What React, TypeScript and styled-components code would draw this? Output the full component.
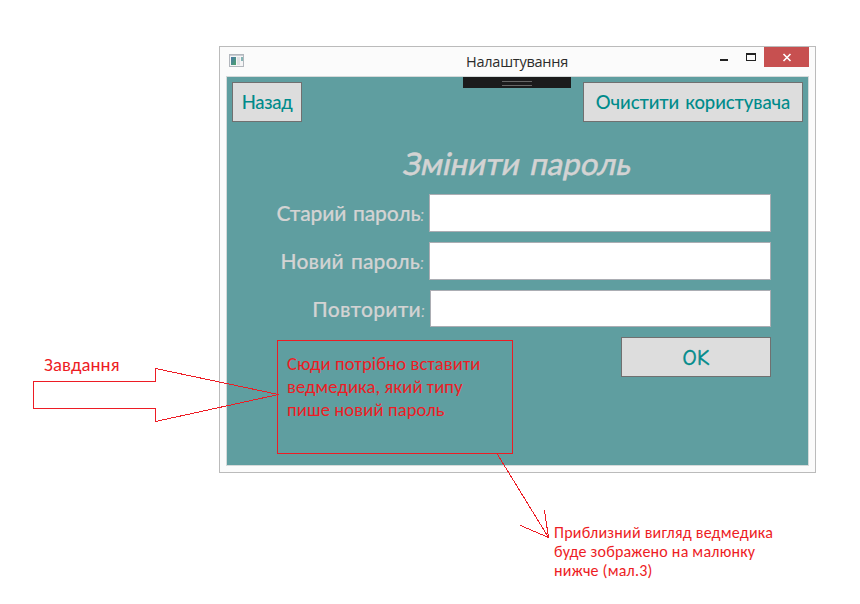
import React from "react";
import styled, { createGlobalStyle } from "styled-components";

const RED = "#ed1c24";
const TEAL = "#5f9ea0";
const comic = `"Comic Sans MS", "Comic Neue", Lato, sans-serif`;
const calibri = `Calibri, Carlito, Lato, sans-serif`;

const GlobalStyle = createGlobalStyle`
  * { box-sizing: border-box; }
  body { margin: 0; background: #fff; overflow: hidden; }
`;

const Page = styled.main`
  position: relative;
  width: 860px;
  height: 604px;
  padding: 46px 0 0 219px;
  overflow: hidden;
  background: #fff;
`;

const Window = styled.section`
  width: 597px;
  height: 427px;
  padding: 0 6px 6px;
  border: 1px solid #bbb;
  background: #fbfbfb;
  display: flex;
  flex-direction: column;
`;

const TitleBar = styled.header`
  height: 29px;
  flex: none;
  display: grid;
  grid-template-columns: 91px 1fr 92px;
  align-items: start;
`;

const AppIcon = styled.svg`
  width: 15px;
  height: 13px;
  margin: 7px 0 0 3px;
  display: block;
`;

const Title = styled.h1`
  margin: 0;
  font: 400 14.5px/29px "Segoe UI", "Open Sans", sans-serif;
  letter-spacing: -0.25px;
  color: #2b2b2b;
  text-align: center;
`;

const WindowControls = styled.div`
  display: flex;
  justify-content: flex-end;
`;

const ControlButton = styled.button<{ $width: number; $danger?: boolean }>`
  width: ${(p) => p.$width}px;
  height: 20px;
  padding: 0;
  border: 0;
  background: ${(p) => (p.$danger ? "#c75050" : "transparent")};
  svg { display: block; }
`;

const Client = styled.div`
  position: relative;
  flex: 1;
  border: 1px solid #d5dada;
  background: ${TEAL};
`;

const DebugTab = styled.div`
  position: absolute;
  left: 236px;
  top: 0;
  width: 108px;
  height: 11px;
  padding: 4px 39px;
  background: #1b1b1c;
  &::before {
    content: "";
    display: block;
    height: 3px;
    border: solid #666;
    border-width: 1px 0;
  }
`;

const Toolbar = styled.div`
  display: flex;
  justify-content: space-between;
  padding: 5px 5px 0;
`;

const Button = styled.button<{ $width: number; $size: number; $spacing: number; $stroke?: number }>`
  width: ${(p) => p.$width}px;
  height: 40px;
  padding: 2px 0 0;
  border: 1px solid #707070;
  background: #ddd;
  color: #008b8b;
  font: 500 ${(p) => p.$size}px/36px ${comic};
  letter-spacing: ${(p) => p.$spacing}px;
  -webkit-text-stroke: ${(p) => p.$stroke ?? 0}px currentColor;
  white-space: nowrap;
`;

const Heading = styled.h2`
  margin: 18px 0 0;
  height: 54px;
  font: 500 31px/50px ${comic};
  letter-spacing: 0.05px;
  -webkit-text-stroke: 0.4px currentColor;
  color: #d3d3d3;
  text-align: center;
  transform: skewX(-12deg);
`;

const Form = styled.form`
  padding-right: 37px;
  display: flex;
  flex-direction: column;
  align-items: flex-end;
  gap: 10px;
`;

const Field = styled.label<{ $spacing: number }>`
  display: flex;
  align-items: center;
  gap: 5px;
  font: 500 21px/36px ${comic};
  letter-spacing: ${(p) => p.$spacing}px;
  -webkit-text-stroke: 0.2px currentColor;
  color: #d3d3d3;
  white-space: nowrap;
`;

const LabelText = styled.span`
  padding-top: 2px;
`;

const Input = styled.input<{ $width: number; $height: number }>`
  width: ${(p) => p.$width}px;
  height: ${(p) => p.$height}px;
  padding: 0 8px;
  border: 1px solid #abadb3;
  border-radius: 0;
  background: #fff;
  outline: 0;
`;

const FieldRow = styled.div<{ $height: number }>`
  height: ${(p) => p.$height}px;
  display: flex;
  align-items: center;
`;

const Arrows = styled.svg`
  position: absolute;
  inset: 0;
  fill: none;
  stroke: ${RED};
  stroke-width: 1;
  shape-rendering: crispEdges;
  pointer-events: none;
`;

const Note = styled.p<{ $x: number; $y: number; $size: number; $line: number; $spacing: number }>`
  position: absolute;
  left: ${(p) => p.$x}px;
  top: ${(p) => p.$y}px;
  margin: 0;
  color: ${RED};
  font: 400 ${(p) => p.$size}px/${(p) => p.$line}px ${calibri};
  letter-spacing: ${(p) => p.$spacing}px;
  white-space: nowrap;
`;

const Callout = styled.div`
  position: absolute;
  left: 277px;
  top: 340px;
  width: 236px;
  height: 114px;
  border: 1px solid ${RED};
`;

const fields = [
  { label: "Старий пароль:", width: 342, height: 38, spacing: -0.15 },
  { label: "Новий пароль:", width: 342, height: 38, spacing: 0.15 },
  { label: "Повторити:", width: 341, height: 37, spacing: 0.25 },
];

export default function App() {
  return (
    <Page>
      <GlobalStyle />
      <Window>
        <TitleBar>
          <AppIcon viewBox="0 0 15 13">
            <defs>
              <linearGradient id="pane" x1="0" y1="0" x2="1" y2="1">
                <stop offset="0" stopColor="#4b77a8" />
                <stop offset="1" stopColor="#4ba36b" />
              </linearGradient>
            </defs>
            <rect x="0.5" y="0.5" width="14" height="12" fill="#f5f5f6" stroke="#b3b7bd" />
            <path d="M1 1.5h13" stroke="#c9ccd2" />
            <rect x="2" y="3" width="5" height="8" fill="url(#pane)" />
            <rect x="8" y="3" width="3" height="8" fill="#e0e2e4" />
            <rect x="12" y="3" width="2" height="4" fill="#86b5b5" />
          </AppIcon>
          <Title>Налаштування</Title>
          <WindowControls>
            <ControlButton $width={26} aria-label="Згорнути">
              <svg width="26" height="20"><rect x="3" y="12" width="8" height="2" fill="#222" /></svg>
            </ControlButton>
            <ControlButton $width={21} aria-label="Розгорнути">
              <svg width="21" height="20" shapeRendering="crispEdges">
                <path d="M3 6h10v8H3z M4 8v5h8V8z" fill="#222" fillRule="evenodd" />
              </svg>
            </ControlButton>
            <ControlButton $width={45} $danger aria-label="Закрити">
              <svg width="45" height="20"><path d="M19.5 7l7 7M26.5 7l-7 7" stroke="#fff" strokeWidth="1.6" /></svg>
            </ControlButton>
          </WindowControls>
        </TitleBar>
        <Client>
          <DebugTab />
          <Toolbar>
            <Button $width={70} $size={18.5} $spacing={-0.3}>Назад</Button>
            <Button $width={220} $size={18.5} $spacing={-0.1}>Очистити користувача</Button>
          </Toolbar>
          <Heading>Змінити пароль</Heading>
          <Form>
            {fields.map((f) => (
              <FieldRow key={f.label} $height={f.height}>
                <Field $spacing={f.spacing}>
                  <LabelText>{f.label}</LabelText>
                  <Input type="password" $width={f.width} $height={f.height} />
                </Field>
              </FieldRow>
            ))}
            <Button type="button" $width={150} $size={22} $spacing={0.3} $stroke={0.5}>OK</Button>
          </Form>
        </Client>
      </Window>
      <Arrows width="860" height="604">
        <path d="M33.5 381.5H155.5V368.5L278.5 394.5L155.5 421.5V408.5H33.5Z" />
        <path d="M497.5 454.5L548.5 537.5M544.5 510.5L548.5 537.5L520.5 525.5" />
      </Arrows>
      <Callout />
      <Note $x={44} $y={353} $size={18.67} $line={23} $spacing={0.12}>Завдання</Note>
      <Note $x={287} $y={352} $size={18.67} $line={23} $spacing={0.08}>
        Сюди потрібно вставити<br />ведмедика, який типу<br />пише новий пароль
      </Note>
      <Note $x={554} $y={523} $size={16} $line={19} $spacing={0.22}>
        Приблизний вигляд ведмедика<br />буде зображено на малюнку<br />нижче (мал.3)
      </Note>
    </Page>
  );
}
